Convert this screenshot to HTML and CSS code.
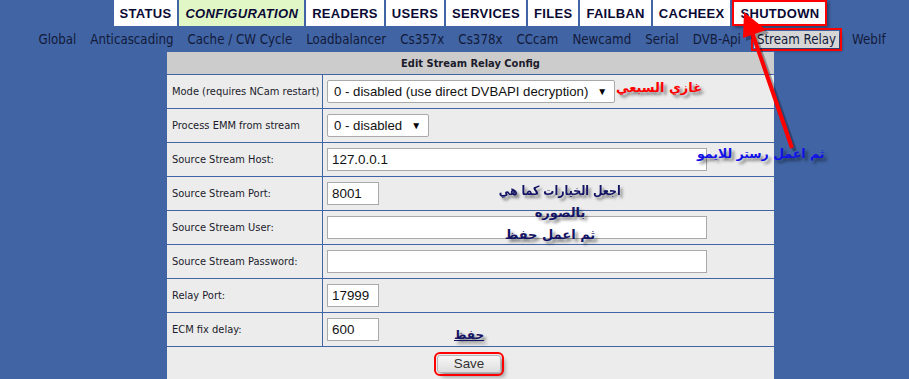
FILE: index.html
```html
<!DOCTYPE html>
<html lang="en">
<head>
<meta charset="utf-8">
<title>Edit Stream Relay Config</title>
<link rel="stylesheet" href="styles.css">
</head>
<body>
<div class="page">
  <nav class="menu">
    <a class="tab">STATUS</a>
    <a class="tab active">CONFIGURATION</a>
    <a class="tab">READERS</a>
    <a class="tab">USERS</a>
    <a class="tab">SERVICES</a>
    <a class="tab">FILES</a>
    <a class="tab">FAILBAN</a>
    <a class="tab">CACHEEX</a>
    <a class="tab marked">SHUTDOWN</a>
  </nav>
  <nav class="submenu">
    <a>Global</a>
    <a>Anticascading</a>
    <a>Cache / CW Cycle</a>
    <a>Loadbalancer</a>
    <a>Cs357x</a>
    <a>Cs378x</a>
    <a>CCcam</a>
    <a>Newcamd</a>
    <a>Serial</a>
    <a>DVB-Api</a>
    <a class="current">Stream Relay</a>
    <a>WebIf</a>
  </nav>
  <form class="config">
    <table class="grid">
      <tr><th colspan="2">Edit Stream Relay Config</th></tr>
      <tr>
        <td class="label">Mode (requires NCam restart)</td>
        <td class="field"><div class="select">0 - disabled (use direct DVBAPI decryption)<span class="caret">&#9660;</span></div></td>
      </tr>
      <tr>
        <td class="label">Process EMM from stream</td>
        <td class="field"><div class="select">0 - disabled<span class="caret">&#9660;</span></div></td>
      </tr>
      <tr>
        <td class="label">Source Stream Host:</td>
        <td class="field"><input class="text long" type="text" value="127.0.0.1"></td>
      </tr>
      <tr>
        <td class="label">Source Stream Port:</td>
        <td class="field"><input class="text short" type="text" value="8001"></td>
      </tr>
      <tr>
        <td class="label">Source Stream User:</td>
        <td class="field"><input class="text long" type="text" value=""></td>
      </tr>
      <tr>
        <td class="label">Source Stream Password:</td>
        <td class="field"><input class="text long" type="text" value=""></td>
      </tr>
      <tr>
        <td class="label">Relay Port:</td>
        <td class="field"><input class="text short" type="text" value="17999"></td>
      </tr>
      <tr>
        <td class="label">ECM fix delay:</td>
        <td class="field"><input class="text short" type="text" value="600"></td>
      </tr>
      <tr>
        <td class="actions" colspan="2"><button class="save" type="button">Save</button></td>
      </tr>
    </table>
  </form>
</div>

<div class="note note-name" dir="rtl">غازي السبعي</div>
<div class="note note-restart" dir="rtl">ثم اعمل رستر للايمو</div>
<div class="note note-steps" dir="rtl">
  <span class="l1">اجعل الخيارات كما هي</span>
  <span class="l2">بالصوره</span>
  <span class="l3">ثم اعمل حفظ</span>
</div>
<div class="note note-save" dir="rtl">حفظ</div>

<svg class="arrow" width="909" height="379" viewBox="0 0 909 379" aria-hidden="true">
  <g class="arrow-shadow">
    <line x1="755" y1="35" x2="795" y2="151" stroke="#000" stroke-width="4"/>
    <polygon points="747,15 769,33 746,41"/>
  </g>
  <line x1="752" y1="32" x2="792" y2="148" stroke="#ff0000" stroke-width="4"/>
  <polygon points="744,12 766,30 743,38" fill="#ff0000"/>
</svg>
</body>
</html>
```
FILE: styles.css
```css
html, body {
  margin: 0;
  padding: 0;
}
body {
  background: #4064a4;
  width: 909px;
  height: 379px;
  overflow: hidden;
  position: relative;
  font-family: "DejaVu Sans Condensed", "DejaVu Sans", sans-serif;
  font-stretch: condensed;
}
.page {
  padding-left: 32px;
  display: flex;
  flex-direction: column;
  align-items: center;
}

/* top menu */
.menu {
  display: flex;
  gap: 2px;
  height: 26px;
  margin-left: 0;
}
.tab {
  display: flex;
  align-items: center;
  padding: 0 6px;
  background: #ffffff;
  color: #0a0a35;
  font-family: "Liberation Sans", Arial, sans-serif;
  font-weight: bold;
  font-size: 13px;
  letter-spacing: 0.3px;
}
.tab.active {
  background: #e1f7c6;
  font-style: italic;
}
.tab.marked {
  padding: 0 8px;
  outline: 2px solid #ff0000;
  outline-offset: -2px;
  box-shadow: 2px 2px 3px rgba(0,0,0,0.35);
}

/* sub menu */
.submenu {
  display: flex;
  gap: 14px;
  height: 24px;
  align-items: center;
  margin-top: 1px;
  padding-right: 17px;
  font-size: 13.2px;
  color: #131a3a;
}
.submenu a {
  padding: 1px 0;
}
.submenu .current {
  background: #d6d6d6;
  padding: 1px 3px;
  margin: 0 -1px;
  outline: 2px solid #ff0000;
  outline-offset: 1px;
  box-shadow: 3px 3px 3px rgba(0,0,0,0.35);
}

/* config table */
.grid {
  border-collapse: collapse;
  width: 609px;
  color: #1b1b2b;
  font-size: 11px;
}
.grid th, .grid td {
  border: 1px solid #4064a4;
  background: #ececec;
  padding: 0;
}
.grid th {
  background: #cccccc;
  height: 22px;
  font-weight: bold;
  font-size: 11px;
  text-align: center;
}
.grid td {
  height: 33px;
}
.grid .label {
  width: 150px;
  padding-left: 5px;
}
.grid .field {
  padding-left: 4px;
}
.select {
  display: inline-flex;
  align-items: center;
  box-sizing: border-box;
  height: 23px;
  padding: 0 7px 0 6px;
  gap: 9px;
  background: #fff;
  border: 1px solid #a9a9a9;
  border-radius: 2px;
  font-family: "Liberation Sans", Arial, sans-serif;
  font-size: 13.2px;
  color: #111;
  vertical-align: middle;
}
.caret {
  font-size: 10px;
  color: #000;
}
.text {
  box-sizing: border-box;
  height: 23px;
  margin: 0;
  padding: 0 4px;
  border: 1px solid #a9a9a9;
  background: #fff;
  font-family: "Liberation Sans", Arial, sans-serif;
  font-size: 13.4px;
  color: #111;
  vertical-align: middle;
}
.text.long { width: 380px; }
.text.short { width: 52px; }
.actions {
  text-align: center;
}
.save {
  box-sizing: border-box;
  width: 64px;
  height: 18px;
  margin: 0 0 0 -3px;
  padding: 0;
  border: 1px solid #b5b5b5;
  border-radius: 3px;
  background: linear-gradient(#f6f6f6, #dedede);
  font-family: "Liberation Sans", Arial, sans-serif;
  font-size: 13.4px;
  color: #333;
  outline: 2px solid #ff0000;
  outline-offset: 1px;
  box-shadow: 4px 4px 4px rgba(0,0,0,0.35);
}

/* annotations */
.note {
  position: absolute;
  font-family: "DejaVu Sans", sans-serif;
  font-stretch: normal;
  font-weight: bold;
  font-size: 13px;
  white-space: nowrap;
  text-shadow: 3px 3px 3px rgba(0,0,0,0.45);
}
.note-name {
  left: 616px;
  top: 80px;
  color: #ff0000;
}
.note-restart {
  left: 697px;
  top: 146px;
  font-size: 12.5px;
  color: #1212e6;
}
.note-steps {
  left: 490px;
  top: 180px;
  width: 140px;
  display: flex;
  flex-direction: column;
  align-items: center;
  line-height: 22px;
  color: #141465;
}
.note-steps .l1 {
  transform: scaleX(0.85);
}
.note-steps .l3 {
  margin-right: 20px;
}
.note-save {
  left: 454px;
  top: 328px;
  font-size: 12px;
  color: #141465;
  text-decoration: underline;
}

.arrow {
  position: absolute;
  left: 0;
  top: 0;
  pointer-events: none;
}
.arrow-shadow {
  opacity: 0.3;
}
```
